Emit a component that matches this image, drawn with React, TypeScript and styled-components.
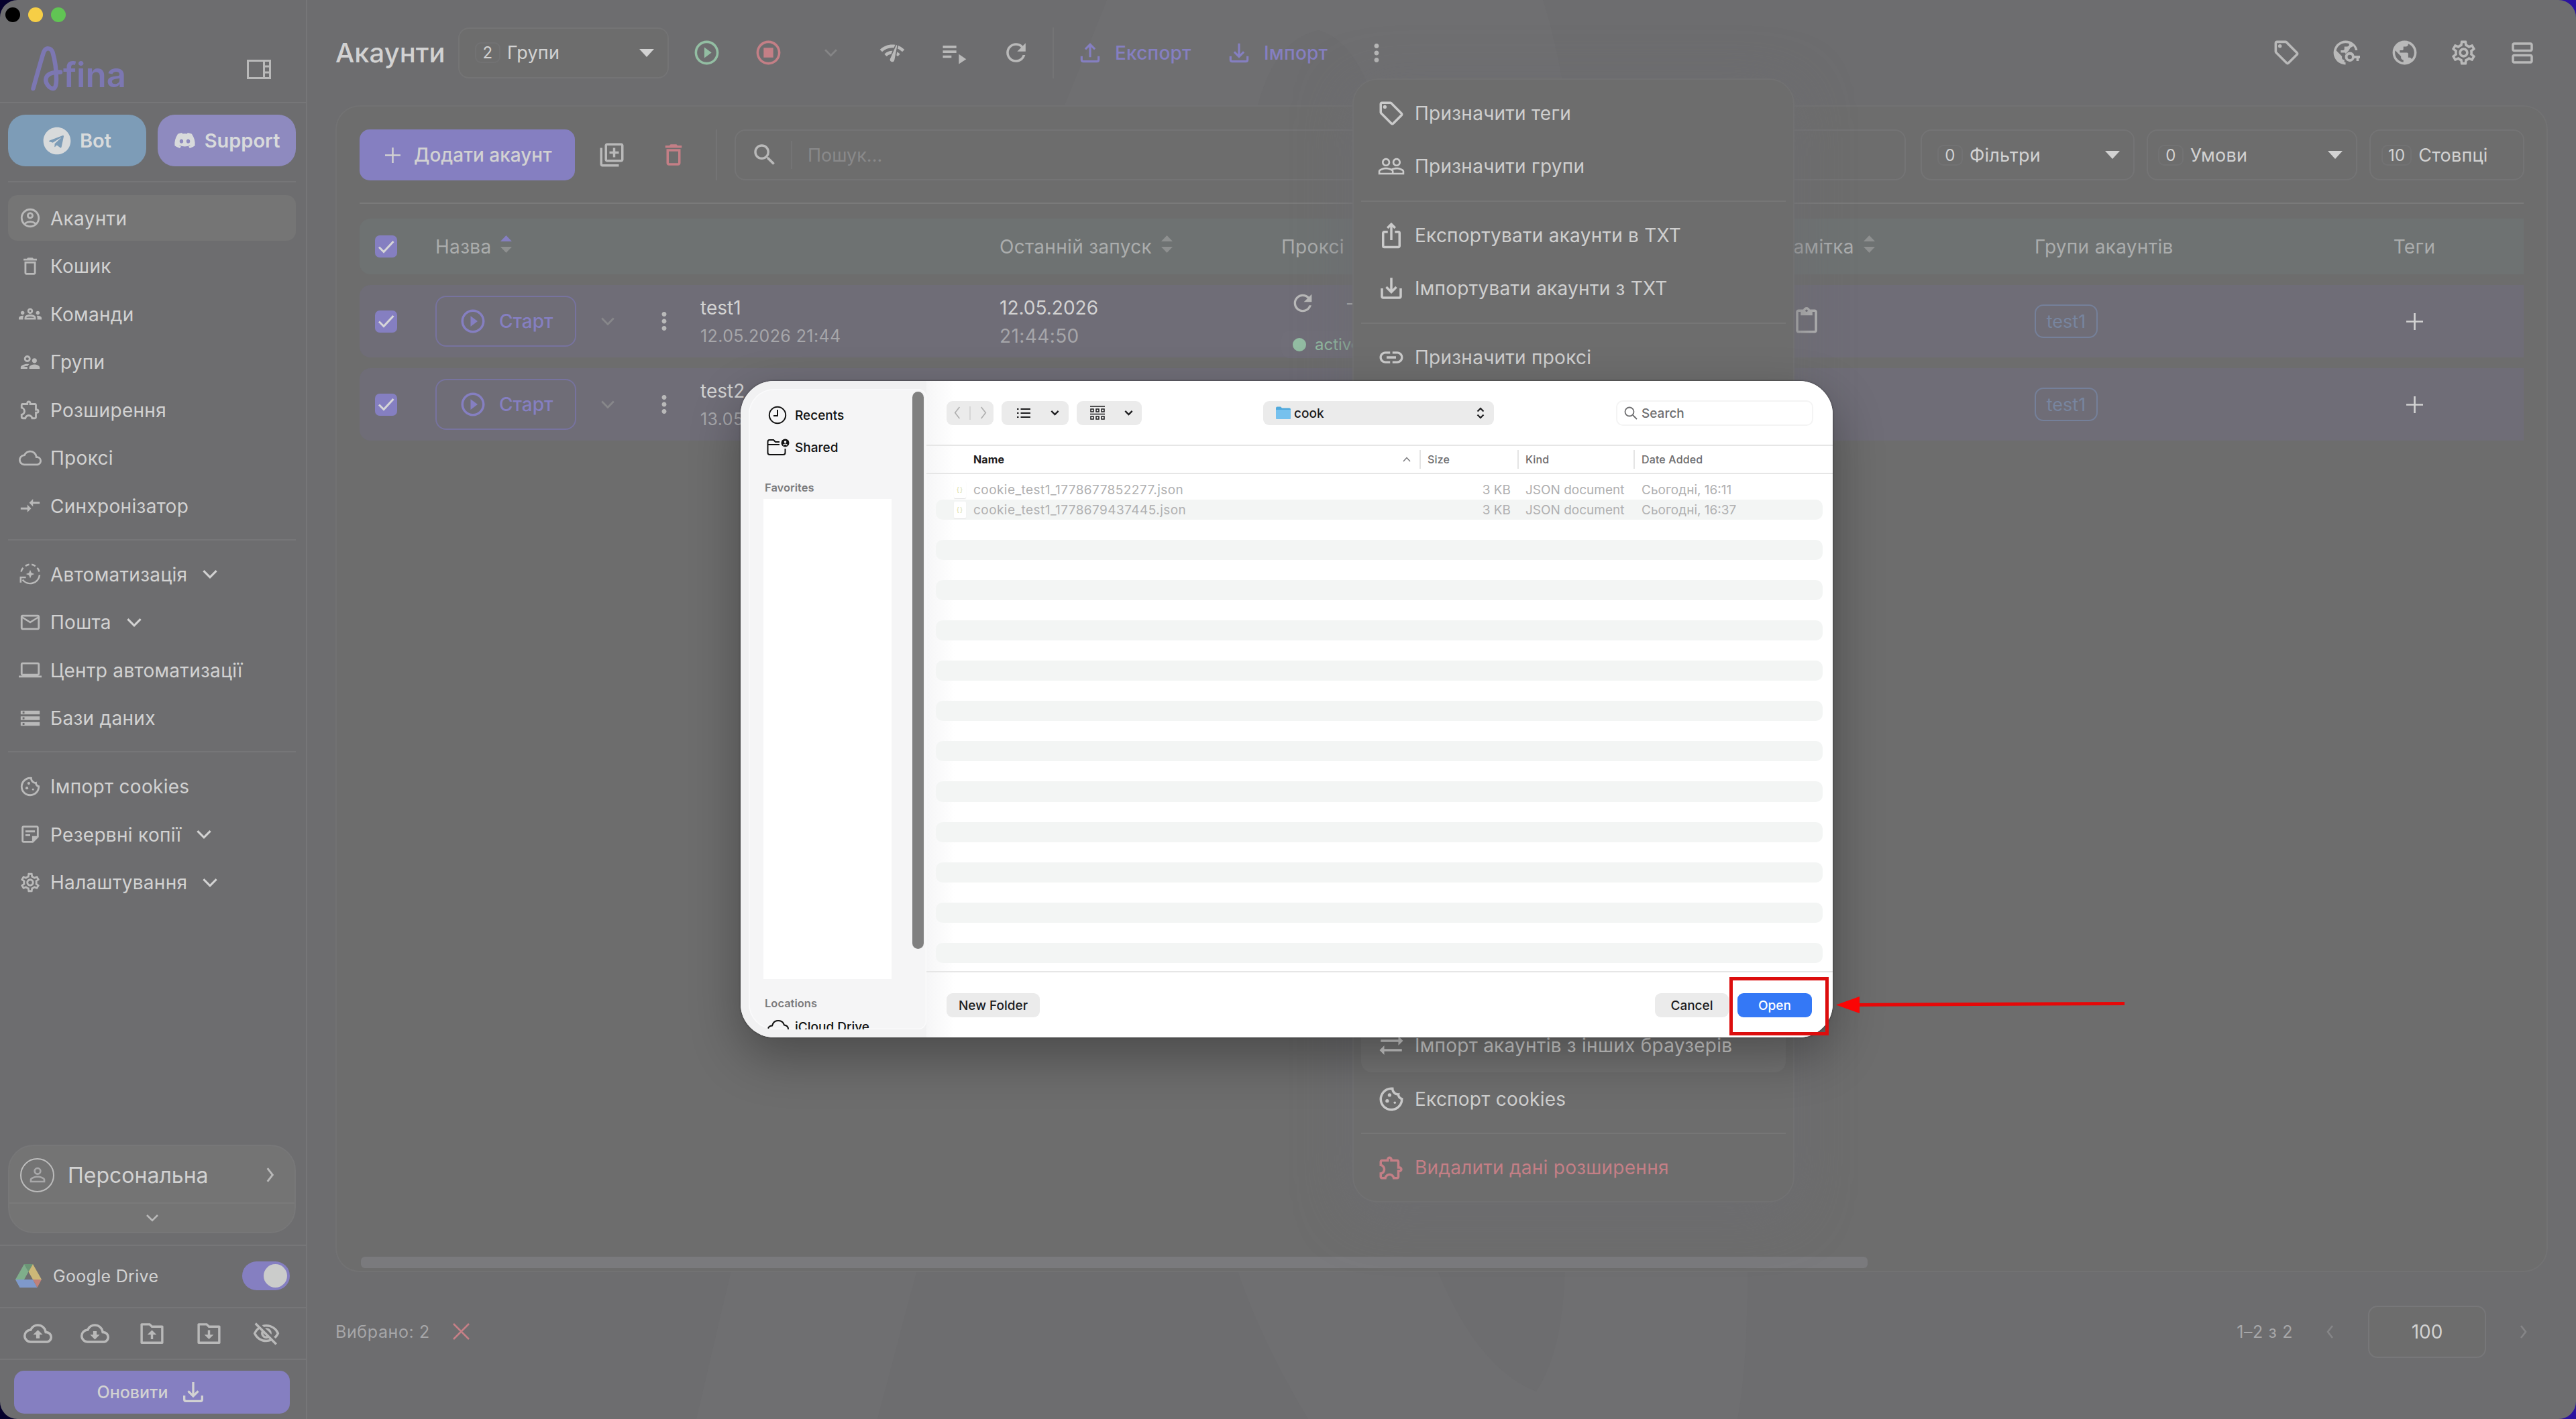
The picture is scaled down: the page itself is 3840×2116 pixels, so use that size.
import type { ReactNode } from "react";
import styled, { createGlobalStyle } from "styled-components";
import { FaDiscord, FaTelegram } from "react-icons/fa";
import { RiFolderDownloadLine, RiFolderUploadLine } from "react-icons/ri";
import {
  MdCompareArrows,
  MdContentPaste,
  MdDeleteOutline,
  MdIosShare,
  MdLink,
  MdMailOutline,
  MdMoreVert,
  MdNetworkCheck,
  MdOutlineAccountCircle,
  MdOutlineCloud,
  MdOutlineCloudDownload,
  MdOutlineCloudUpload,
  MdOutlineCookie,
  MdOutlineExtension,
  MdOutlineGroups,
  MdOutlineLaptop,
  MdOutlineLibraryAdd,
  MdOutlineSell,
  MdOutlineSettings,
  MdOutlineStickyNote2,
  MdOutlineStopCircle,
  MdOutlineSupervisorAccount,
  MdOutlineViewAgenda,
  MdOutlineVisibilityOff,
  MdPeopleOutline,
  MdPersonOutline,
  MdPlayCircleOutline,
  MdPlaylistPlay,
  MdPublic,
  MdRefresh,
  MdSaveAlt,
  MdSearch,
  MdStorage,
  MdSyncAlt,
} from "react-icons/md";

const colors = {
  base: "#6d6d6f",
  surface: "#6d6d6d",
  raised: "#757575",
  line: "#767678",
  border: "#747475",
  text: "#d2d2d2",
  icon: "#b9b9b9",
  muted: "#a8a8a9",
  faint: "#89898a",
  purple: "#857fc1",
  green: "#93bea3",
  red: "#c47f86",
};

const GlobalStyle = createGlobalStyle`
  * {
    box-sizing: border-box;
  }
  body {
    margin: 0;
    background: linear-gradient(90deg, #05002c 0%, #05002c 50%, #2a12a0 100%);
    font-family: Inter, "Noto Sans", sans-serif;
    color: ${colors.text};
  }
  svg {
    display: block;
    flex: none;
  }
`;

const Window = styled.div`
  position: relative;
  display: flex;
  width: 3840px;
  height: 2116px;
  overflow: hidden;
  border-radius: 26px;
  background: ${colors.base};
`;

/* ---------- small shared parts ---------- */

const IconSlot = styled.span<{ $w: number; $size: number; $color?: string }>`
  display: flex;
  flex: none;
  align-items: center;
  justify-content: center;
  width: ${(p) => p.$w}px;
  font-size: ${(p) => p.$size}px;
  color: ${(p) => p.$color ?? colors.icon};
`;

const Grow = styled.div`
  flex: 1;
`;

interface ChevronProps {
  dir?: "down" | "left" | "right";
  size?: number;
  weight?: number;
}

const chevronPaths = {
  down: "M2 6l8 8 8-8",
  left: "M13 1l-7 9 7 9",
  right: "M7 1l7 9-7 9",
};

const Chevron = ({ dir = "down", size = 24, weight = 2.6 }: ChevronProps) => (
  <svg width={size} height={size} viewBox="0 0 20 20" fill="none" stroke="currentColor" strokeWidth={weight}>
    <path d={chevronPaths[dir]} />
  </svg>
);

const TrayIcon = ({ up = false }: { up?: boolean }) => (
  <svg width="1em" height="1em" viewBox="0 0 24 24" fill="none" stroke="currentColor" strokeWidth="2">
    <path d="M4 15v3.5q0 1.5 1.500 1.500h13q1.500 0 1.500-1.500V15" />
    <path d={up ? "M12 16V4M7.500 8.500L12 4l4.500 4.500" : "M12 3v12M7.500 11l4.500 4.500L16.500 11"} />
  </svg>
);

const AutomationIcon = () => (
  <svg width="1em" height="1em" viewBox="0 0 24 24" fill="none" stroke="currentColor" strokeWidth="1.8">
    <path d="M2.500 9.500A10 10 0 0 1 4.500 5.500M7 3.500a10 10 0 0 1 4-1.500M13.500 2a10 10 0 0 1 4 1.700M19.500 5.500a10 10 0 0 1 2 4" />
    <path d="M21.900 13A10 10 0 0 1 4 18M2 21v-5.500h5.500" />
    <path d="M12 7.500l1.300 3.200 3.200 1.300-3.200 1.300L12 16.500l-1.300-3.200L7.500 12l3.200-1.300z" fill="currentColor" stroke="none" />
  </svg>
);

const GlobeKeyIcon = () => (
  <svg width="1em" height="1em" viewBox="0 0 24 24" fill="currentColor">
    <path d="M12 2a10 10 0 0 0 0 20v-2l-1-.1V18a2 2 0 0 1-2-2v-1l-4.800-4.800A8 8 0 0 1 15 4.600V5a2 2 0 0 1-2 2h-2v2a1 1 0 0 1-1 1H8v2h3.500l.5 1 2.500-2.500L16 8l2.500-1.400A8 8 0 0 1 20 10h2A10 10 0 0 0 12 2z" />
    <path d="M15.500 11.500a4 4 0 1 0 3.800 5.200H21V19h2v-2.300h1v-2.200h-4.700a4 4 0 0 0-3.800-3zm0 2.300a1.800 1.800 0 1 0 0 3.600 1.800 1.800 0 0 0 0-3.600z" fillRule="evenodd" />
  </svg>
);

const PanelIcon = () => (
  <svg width="36" height="29" viewBox="0 0 36 29" fill="none" stroke="currentColor" strokeWidth="3">
    <path d="M1.500 1.500h33v26h-33zM25.500 1.500v26M25.500 10h9M25.500 19h9" />
  </svg>
);

const DriveIcon = () => (
  <svg width="39" height="35" viewBox="0 0 39 35">
    <path d="M13 0h13l-6.500 11.500z" fill="#6b9676" />
    <path d="M13 0L0 23l6.500 11.500L19.500 11.500z" fill="#7fae8b" />
    <path d="M26 0l-6.500 11.500L26 23h13z" fill="#ccb878" />
    <path d="M13 23h13l6.500 12h-26L0 23z" fill="#7f99cb" />
    <path d="M26 23h13l-6.500 12z" fill="#c08179" />
  </svg>
);

/* ---------- sidebar ---------- */

const Sidebar = styled.aside`
  display: flex;
  flex: none;
  flex-direction: column;
  width: 458px;
  border-right: 2px solid ${colors.line};
`;

const TrafficLights = styled.div`
  display: flex;
  gap: 12px;
  height: 54px;
  padding: 11px 0 0 8px;
`;

const Light = styled.span<{ $color: string }>`
  width: 22px;
  height: 22px;
  border-radius: 50%;
  background: ${(p) => p.$color};
`;

const Brand = styled.div`
  display: flex;
  align-items: center;
  justify-content: space-between;
  height: 100px;
  padding: 0 52px 0 45px;
  border-bottom: 2px solid ${colors.line};
`;

const LogoText = styled.div`
  display: flex;
  align-items: flex-end;
  height: 70px;
  color: #7c77b2;
  font-size: 51px;
  font-weight: 600;
  line-height: 52px;
`;

const SocialRow = styled.div`
  display: flex;
  gap: 17px;
  margin: 0 15px 0 12px;
  padding: 17px 0 22px;
  border-bottom: 2px solid ${colors.line};
`;

const SocialButton = styled.button<{ $bg: string }>`
  display: flex;
  flex: 1;
  align-items: center;
  justify-content: center;
  gap: 13px;
  height: 77px;
  border: 0;
  border-radius: 26px;
  background: ${(p) => p.$bg};
  color: #d8dadb;
  font: 600 29px Inter, sans-serif;
`;

const Nav = styled.nav`
  display: flex;
  flex-direction: column;
  margin: 0 15px 0 12px;
  padding-top: 19px;
`;

const NavGroup = styled.div`
  display: flex;
  flex-direction: column;
  gap: 3.500px;
  padding-bottom: 15.500px;

  & + & {
    border-top: 2px solid ${colors.line};
    padding-top: 16.500px;
  }
`;

const NavItem = styled.a<{ $active?: boolean }>`
  display: flex;
  align-items: center;
  height: 68px;
  padding-left: 15px;
  border-radius: 14px;
  background: ${(p) => (p.$active ? colors.raised : "transparent")};
  font-size: 28px;
  letter-spacing: 0.3px;
`;

const NavLabel = styled.span`
  margin: 0 22px 0 12px;
  padding-top: 1px;
`;

const Profile = styled.div`
  margin: 0 15px 17px 12px;
  border: 2px solid #777778;
  border-radius: 38px;
  background: #747474;
`;

const ProfileMain = styled.div`
  display: flex;
  align-items: center;
  height: 86px;
  padding: 2px 25px 0 16px;
  border-bottom: 2px solid #7a7a7a;
  font-size: 32px;
`;

const Avatar = styled.span`
  display: flex;
  align-items: center;
  justify-content: center;
  width: 51px;
  height: 51px;
  margin-right: 20px;
  border: 2px solid #bcbcbc;
  border-radius: 50%;
  color: ${colors.muted};
  font-size: 34px;
`;

const ProfileMore = styled.div`
  display: flex;
  align-items: center;
  justify-content: center;
  height: 42px;
  color: ${colors.icon};
`;

const DriveRow = styled.div`
  display: flex;
  align-items: center;
  height: 93px;
  padding: 0 24px 2px 23px;
  border-top: 2px solid ${colors.line};
  font-size: 25px;
  letter-spacing: 0.3px;
`;

const DriveLabel = styled.span`
  flex: 1;
  padding-left: 17px;
`;

const Toggle = styled.span`
  display: flex;
  justify-content: flex-end;
  width: 71px;
  height: 43px;
  padding: 4px;
  border-radius: 22px;
  background: ${colors.purple};

  &::after {
    content: "";
    width: 35px;
    height: 35px;
    border-radius: 50%;
    background: #cbcccb;
  }
`;

const ToolRow = styled.div`
  display: flex;
  align-items: center;
  height: 77px;
  padding-left: 14px;
  border-top: 2px solid ${colors.line};
`;

const UpdateArea = styled.div`
  height: 90px;
  padding: 16px 25px 0 21px;
  border-top: 2px solid ${colors.line};
`;

const UpdateButton = styled.button`
  display: flex;
  align-items: center;
  justify-content: center;
  gap: 18px;
  width: 411px;
  height: 64px;
  border: 0;
  border-radius: 15px;
  background: ${colors.purple};
  color: ${colors.text};
  font: 500 25px Inter, sans-serif;
`;

interface NavEntry {
  icon: ReactNode;
  label: string;
  active?: boolean;
  expandable?: boolean;
}

const navGroups: NavEntry[][] = [
  [
    { icon: <MdOutlineAccountCircle />, label: "Акаунти", active: true },
    { icon: <MdDeleteOutline />, label: "Кошик" },
    { icon: <MdOutlineGroups />, label: "Команди" },
    { icon: <MdOutlineSupervisorAccount />, label: "Групи" },
    { icon: <MdOutlineExtension />, label: "Розширення" },
    { icon: <MdOutlineCloud />, label: "Проксі" },
    { icon: <MdCompareArrows />, label: "Синхронізатор" },
  ],
  [
    { icon: <AutomationIcon />, label: "Автоматизація", expandable: true },
    { icon: <MdMailOutline />, label: "Пошта", expandable: true },
    { icon: <MdOutlineLaptop />, label: "Центр автоматизації" },
    { icon: <MdStorage />, label: "Бази даних" },
  ],
  [
    { icon: <MdOutlineCookie />, label: "Імпорт cookies" },
    { icon: <MdOutlineStickyNote2 />, label: "Резервні копії", expandable: true },
    { icon: <MdOutlineSettings />, label: "Налаштування", expandable: true },
  ],
];

const SidebarPanel = () => (
  <Sidebar>
    <TrafficLights>
      <Light $color="#000" />
      <Light $color="#f6ce46" />
      <Light $color="#61c454" />
    </TrafficLights>
    <Brand>
      <LogoText>
        <svg width="49" height="70" viewBox="0 0 49 70" fill="none" stroke="currentColor" strokeWidth="6.500" strokeLinecap="round">
          <path d="M4.500 64C10 44 15 26 20 10c3-8 11-7 13.500 0C37 22 39 36 39 50c0 8-1 14-5 14-6 0-12-9-10.500-15C25 42 34 39.500 45 39.500" />
        </svg>
        fina
      </LogoText>
      <IconSlot $w={36} $size={36}>
        <PanelIcon />
      </IconSlot>
    </Brand>
    <SocialRow>
      <SocialButton $bg="#7d9cb7">
        <FaTelegram size={42} /> Bot
      </SocialButton>
      <SocialButton $bg="#8e8abf">
        <FaDiscord size={33} /> Support
      </SocialButton>
    </SocialRow>
    <Nav>
      {navGroups.map((group, i) => (
        <NavGroup key={i}>
          {group.map((item) => (
            <NavItem key={item.label} $active={item.active}>
              <IconSlot $w={36} $size={34}>
                {item.icon}
              </IconSlot>
              <NavLabel>{item.label}</NavLabel>
              {item.expandable && <Chevron />}
            </NavItem>
          ))}
        </NavGroup>
      ))}
    </Nav>
    <Grow />
    <Profile>
      <ProfileMain>
        <Avatar>
          <MdPersonOutline />
        </Avatar>
        Персональна
        <Grow />
        <IconSlot $w={24} $size={24}>
          <Chevron dir="right" size={22} />
        </IconSlot>
      </ProfileMain>
      <ProfileMore>
        <Chevron size={20} />
      </ProfileMore>
    </Profile>
    <DriveRow>
      <DriveIcon />
      <DriveLabel>Google Drive</DriveLabel>
      <Toggle />
    </DriveRow>
    <ToolRow>
      <IconSlot $w={85} $size={43}>
        <MdOutlineCloudUpload />
      </IconSlot>
      <IconSlot $w={85} $size={43}>
        <MdOutlineCloudDownload />
      </IconSlot>
      <IconSlot $w={85} $size={41}>
        <RiFolderUploadLine />
      </IconSlot>
      <IconSlot $w={85} $size={41}>
        <RiFolderDownloadLine />
      </IconSlot>
      <IconSlot $w={85} $size={42}>
        <MdOutlineVisibilityOff />
      </IconSlot>
    </ToolRow>
    <UpdateArea>
      <UpdateButton>
        Оновити
        <IconSlot $w={40} $size={40} $color={colors.text}>
          <TrayIcon />
        </IconSlot>
      </UpdateButton>
    </UpdateArea>
  </Sidebar>
);

/* ---------- main area ---------- */

const Backdrop = styled.svg`
  position: absolute;
  inset: 0;
`;

const Main = styled.main`
  position: relative;
  display: flex;
  flex: 1;
  flex-direction: column;
  min-width: 0;
  padding: 0 42px;
`;

const Header = styled.header`
  display: flex;
  align-items: center;
  height: 157px;
`;

const HeaderTools = styled.div`
  display: flex;
  gap: 44px;
  margin-left: auto;
  margin-right: 16px;
`;

const Title = styled.h1`
  flex: none;
  width: 183px;
  margin: 0;
  font-size: 40px;
  font-weight: 500;
`;

const Select = styled.div<{ $w: number; $pad?: number }>`
  display: flex;
  flex: none;
  align-items: center;
  width: ${(p) => p.$w}px;
  height: 76px;
  padding: 0 20px 0 ${(p) => p.$pad ?? 23}px;
  border: 2px solid ${colors.border};
  border-radius: 16px;
  background: ${colors.surface};
  font-size: 27px;
  letter-spacing: 0.2px;
`;

const Count = styled.span`
  display: flex;
  align-items: center;
  justify-content: center;
  min-width: 38px;
  height: 31px;
  margin-right: 10px;
  padding: 0 8px;
  border: 2px solid #727273;
  border-radius: 9px;
  font-size: 24px;
`;

const Caret = styled.span`
  margin-left: auto;
  border: 11px solid transparent;
  border-top: 12px solid ${colors.text};
  border-bottom: 0;
`;

const Separator = styled.span<{ $h: number; $color?: string }>`
  flex: none;
  width: 2px;
  height: ${(p) => p.$h}px;
  background: ${(p) => p.$color ?? colors.border};
`;

const HeaderLink = styled.button<{ $w: number }>`
  display: flex;
  align-items: center;
  gap: 17px;
  width: ${(p) => p.$w}px;
  padding: 0;
  border: 0;
  background: none;
  color: ${colors.purple};
  font: 500 28px Inter, sans-serif;
  letter-spacing: 0.2px;
`;

const Card = styled.section`
  display: flex;
  flex-direction: column;
  width: 3298px;
  height: 1740px;
  padding: 34px 34px 0;
  border: 2px solid #727273;
  border-radius: 36px;
  background: ${colors.surface};
`;

const Toolbar = styled.div`
  display: flex;
  align-items: center;
  height: 111px;
  padding-bottom: 33px;
  border-bottom: 2px solid #7a7a7a;
`;

const AddButton = styled.button`
  display: flex;
  flex: none;
  align-items: center;
  width: 321px;
  height: 76px;
  padding: 0 0 0 38px;
  border: 0;
  border-radius: 15px;
  background: ${colors.purple};
  color: ${colors.text};
  font: 500 28px Inter, sans-serif;
`;

const AddLabel = styled.span`
  padding-left: 20px;
`;

const PlusIcon = ({ size = 24 }: { size?: number }) => (
  <svg width={size} height={size} viewBox="0 0 24 24" stroke="currentColor" strokeWidth="2.600">
    <path d="M12 0v24M0 12h24" />
  </svg>
);

const SearchBox = styled.div`
  display: flex;
  flex: none;
  align-items: center;
  width: 1746px;
  height: 76px;
  margin-right: 22px;
  padding-left: 4px;
  border: 2px solid ${colors.border};
  border-radius: 16px;
  color: ${colors.faint};
  font-size: 27px;
`;

const Placeholder = styled.span`
  padding-left: 23px;
`;

const SelectGroup = styled.div`
  display: flex;
  gap: 18px;
`;

const TableRow = styled.div<{ $head?: boolean }>`
  display: grid;
  grid-template-columns: 113px 841px 420px 746px 377px 403px 326px;
  grid-template-rows: 100%;
  align-items: center;
  height: ${(p) => (p.$head ? 83 : 108)}px;
  margin-top: ${(p) => (p.$head ? 22 : 16)}px;
  border-radius: 16px 0 0 16px;
  background: ${(p) => (p.$head ? "#6e7272" : "#6f6d77")};
  color: ${(p) => (p.$head ? "#abadad" : colors.text)};
  font-size: 28px;
`;

const HeadCell = styled.div<{ $center?: boolean }>`
  display: flex;
  align-items: center;
  justify-content: ${(p) => (p.$center ? "center" : "flex-start")};
  gap: 14px;
  letter-spacing: 0.3px;

  svg {
    margin-bottom: 8px;
  }
`;

const Cell = styled.div<{ $pad?: number; $center?: boolean }>`
  display: flex;
  align-items: center;
  justify-content: ${(p) => (p.$center ? "center" : "flex-start")};
  padding-left: ${(p) => p.$pad ?? 0}px;
  color: inherit;
`;

const Stack = styled.div`
  display: flex;
  flex-direction: column;
  gap: 10px;
  padding-top: 1px;
  line-height: 32px;
`;

const SubText = styled.span<{ $size: number }>`
  color: #a6a6aa;
  font-size: ${(p) => p.$size}px;
  letter-spacing: 0.4px;
`;

const CheckBox = styled.span`
  display: flex;
  align-items: center;
  justify-content: center;
  width: 33px;
  height: 33px;
  border-radius: 7px;
  background: ${colors.purple};
`;

const StartButton = styled.button`
  display: flex;
  flex: none;
  align-items: center;
  width: 210px;
  height: 76px;
  padding: 0 0 0 33px;
  border: 2px solid #77739f;
  border-radius: 16px;
  background: none;
  color: ${colors.purple};
  font: 500 28px Inter, sans-serif;
`;

const StartLabel = styled.span`
  padding-left: 18px;
`;

const ProxyStack = styled.div`
  display: flex;
  flex-direction: column;
  gap: 21px;
  padding-top: 8px;
`;

const ProxyTop = styled.div`
  display: flex;
  align-items: center;
  gap: 44px;
  height: 40px;
  padding-left: 12px;
  color: ${colors.icon};
`;

const StatusChip = styled.span`
  display: flex;
  align-items: center;
  gap: 13px;
  width: 160px;
  height: 41px;
  padding-left: 17px;
  border-radius: 12px;
  background: #706e78;
  color: ${colors.green};
  font-size: 24px;

  &::before {
    content: "";
    width: 20px;
    height: 20px;
    border-radius: 50%;
    background: currentColor;
  }
`;

const GroupTag = styled.span`
  display: flex;
  align-items: center;
  justify-content: center;
  width: 94px;
  height: 50px;
  border: 2px solid #75809a;
  border-radius: 13px;
  color: #78859f;
  font-size: 27px;
`;

const ScrollTrack = styled.div`
  width: 2246px;
  height: 17px;
  margin: auto 0 4px 2px;
  border-radius: 6px;
  background: #7a7a7d;
`;

const Footer = styled.footer`
  display: flex;
  flex: 1;
  align-items: center;
  width: 3316px;
  padding-bottom: 42px;
  color: #a6a6a8;
  font-size: 25px;
  letter-spacing: 0.6px;
`;

const PageSize = styled.span`
  display: flex;
  align-items: center;
  justify-content: center;
  width: 176px;
  height: 78px;
  border: 2px solid #777779;
  border-radius: 14px;
  background: ${colors.surface};
  color: ${colors.text};
  font-size: 28px;
  letter-spacing: 0;
`;

const SortIcon = ({ asc = false }: { asc?: boolean }) => (
  <svg width="17" height="26" viewBox="0 0 17 26" fill="#8e9090">
    <path d="M8.500 0L17 9H0z" fill={asc ? colors.purple : undefined} />
    <path d="M8.500 26L17 17H0z" />
  </svg>
);

const Check = () => (
  <CheckBox>
    <svg width="25" height="22" viewBox="0 0 25 22" fill="none" stroke="#d6d6d8" strokeWidth="3">
      <path d="M2 11.500l7 7L23.500 3" />
    </svg>
  </CheckBox>
);

const accounts = [
  { name: "test1", created: "12.05.2026 21:44", runDate: "12.05.2026", runTime: "21:44:50", proxy: "active", group: "test1" },
  { name: "test2", created: "13.05.2026 16:10", runDate: "", runTime: "", proxy: "", group: "test1" },
];

const AccountsTable = () => (
  <>
    <TableRow $head>
      <Cell $pad={23}>
        <Check />
      </Cell>
      <HeadCell>
        Назва <SortIcon asc />
      </HeadCell>
      <HeadCell>
        Останній запуск <SortIcon />
      </HeadCell>
      <HeadCell>Проксі</HeadCell>
      <HeadCell>
        Замітка <SortIcon />
      </HeadCell>
      <HeadCell>Групи акаунтів</HeadCell>
      <HeadCell $center>Теги</HeadCell>
    </TableRow>
    {accounts.map((account) => (
      <TableRow key={account.name}>
        <Cell $pad={23}>
          <Check />
        </Cell>
        <Cell>
          <StartButton>
            <IconSlot $w={42} $size={42} $color={colors.purple}>
              <MdPlayCircleOutline />
            </IconSlot>
            <StartLabel>Старт</StartLabel>
          </StartButton>
          <IconSlot $w={94} $size={24} $color="#87878a">
            <Chevron size={22} />
          </IconSlot>
          <IconSlot $w={74} $size={42}>
            <MdMoreVert />
          </IconSlot>
          <Cell $pad={17}>
            <Stack>
              {account.name}
              <SubText $size={25}>{account.created}</SubText>
            </Stack>
          </Cell>
        </Cell>
        <Stack>
          {account.runDate}
          <SubText $size={28}>{account.runTime}</SubText>
        </Stack>
        <ProxyStack>
          {account.proxy && (
            <>
              <ProxyTop>
                <MdRefresh size={40} />-
              </ProxyTop>
              <StatusChip>{account.proxy}</StatusChip>
            </>
          )}
        </ProxyStack>
        <Cell $pad={18}>
          <IconSlot $w={38} $size={42}>
            <MdContentPaste />
          </IconSlot>
        </Cell>
        <Cell>
          <GroupTag>{account.group}</GroupTag>
        </Cell>
        <Cell $center>
          <PlusIcon size={25} />
        </Cell>
      </TableRow>
    ))}
  </>
);

const MainPanel = () => (
  <Main>
    <Header>
      <Title>Акаунти</Title>
      <Select $w={314}>
        <Count>2</Count>
        Групи
        <Caret />
      </Select>
      <IconSlot $w={112} $size={43} $color={colors.green}>
        <MdPlayCircleOutline />
      </IconSlot>
      <IconSlot $w={72} $size={43} $color={colors.red}>
        <MdOutlineStopCircle />
      </IconSlot>
      <IconSlot $w={114} $size={24} $color="#858586">
        <Chevron size={21} />
      </IconSlot>
      <IconSlot $w={70} $size={40}>
        <MdNetworkCheck />
      </IconSlot>
      <IconSlot $w={114} $size={44}>
        <MdPlaylistPlay />
      </IconSlot>
      <IconSlot $w={70} $size={43}>
        <MdRefresh />
      </IconSlot>
      <IconSlot $w={42} $size={20}>
        <Separator $h={76} />
      </IconSlot>
      <IconSlot $w={14} $size={0} />
      <HeaderLink $w={222}>
        <IconSlot $w={40} $size={38} $color={colors.purple}>
          <TrayIcon up />
        </IconSlot>
        Експорт
      </HeaderLink>
      <HeaderLink $w={198}>
        <IconSlot $w={40} $size={38} $color={colors.purple}>
          <TrayIcon />
        </IconSlot>
        Імпорт
      </HeaderLink>
      <IconSlot $w={54} $size={42}>
        <MdMoreVert />
      </IconSlot>
      <HeaderTools>
        <IconSlot $w={44} $size={43}>
          <MdOutlineSell />
        </IconSlot>
        <IconSlot $w={44} $size={43}>
          <GlobeKeyIcon />
        </IconSlot>
        <IconSlot $w={44} $size={43}>
          <MdPublic />
        </IconSlot>
        <IconSlot $w={44} $size={43}>
          <MdOutlineSettings />
        </IconSlot>
        <IconSlot $w={44} $size={42}>
          <MdOutlineViewAgenda />
        </IconSlot>
      </HeaderTools>
    </Header>
    <Card>
      <Toolbar>
        <AddButton>
          <PlusIcon size={23} />
          <AddLabel>Додати акаунт</AddLabel>
        </AddButton>
        <IconSlot $w={110} $size={42}>
          <MdOutlineLibraryAdd />
        </IconSlot>
        <IconSlot $w={74} $size={42} $color={colors.red}>
          <MdDeleteOutline />
        </IconSlot>
        <IconSlot $w={54} $size={20}>
          <Separator $h={76} />
        </IconSlot>
        <SearchBox>
          <IconSlot $w={78} $size={42}>
            <MdSearch />
          </IconSlot>
          <Separator $h={42} />
          <Placeholder>Пошук...</Placeholder>
        </SearchBox>
        <SelectGroup>
          <Select $w={319}>
            <Count>0</Count>
            Фільтри
            <Caret />
          </Select>
          <Select $w={314} $pad={15}>
            <Count>0</Count>
            Умови
            <Caret />
          </Select>
          <Select $w={231} $pad={16}>
            <Count>10</Count>
            Стовпці
          </Select>
        </SelectGroup>
      </Toolbar>
      <AccountsTable />
      <ScrollTrack />
    </Card>
    <Footer>
      Вибрано: 2
      <IconSlot $w={94} $size={24} $color={colors.red}>
        <svg width="25" height="25" viewBox="0 0 25 25" stroke="currentColor" strokeWidth="2.600">
          <path d="M1 1l23 23M24 1L1 24" />
        </svg>
      </IconSlot>
      <Grow />
      1–2 з 2
      <IconSlot $w={112} $size={20} $color="#858587">
        <Chevron dir="left" size={20} />
      </IconSlot>
      <PageSize>100</PageSize>
      <IconSlot $w={110} $size={20} $color="#858587">
        <Chevron dir="right" size={20} />
      </IconSlot>
    </Footer>
  </Main>
);

/* ---------- context menu ---------- */

const Menu = styled.div`
  position: absolute;
  top: 117px;
  left: 2016px;
  display: flex;
  flex-direction: column;
  justify-content: space-between;
  width: 659px;
  height: 1676px;
  padding: 10px 11px;
  border: 2px solid #717172;
  border-radius: 38px;
  background: ${colors.surface};
  box-shadow: 0 16px 80px rgba(109, 109, 113, 0.9);
`;

const MenuBlock = styled.div``;

const MenuItem = styled.div<{ $active?: boolean; $danger?: boolean }>`
  display: flex;
  align-items: center;
  gap: 14px;
  height: 79.500px;
  padding-left: 24px;
  border-radius: 16px;
  background: ${(p) => (p.$active ? "#737373" : "transparent")};
  color: ${(p) => (p.$danger ? colors.red : "#cfcfcf")};
  font-size: 28px;
  letter-spacing: 0.25px;
`;

const MenuLine = styled.div`
  height: 2px;
  margin: 10.500px 0;
  background: #767676;
`;

interface MenuEntryProps {
  icon: ReactNode;
  label: string;
  active?: boolean;
  danger?: boolean;
}

const MenuEntry = ({ icon, label, active, danger }: MenuEntryProps) => (
  <MenuItem $active={active} $danger={danger}>
    <IconSlot $w={42} $size={42} $color={danger ? colors.red : "#cacaca"}>
      {icon}
    </IconSlot>
    {label}
  </MenuItem>
);

const ActionsMenu = () => (
  <Menu>
    <MenuBlock>
      <MenuEntry icon={<MdOutlineSell />} label="Призначити теги" />
      <MenuEntry icon={<MdPeopleOutline />} label="Призначити групи" />
      <MenuLine />
      <MenuEntry icon={<MdIosShare />} label="Експортувати акаунти в TXT" />
      <MenuEntry icon={<MdSaveAlt />} label="Імпортувати акаунти з TXT" />
      <MenuLine />
      <MenuEntry icon={<MdLink />} label="Призначити проксі" />
    </MenuBlock>
    <MenuBlock>
      <MenuEntry icon={<MdSyncAlt />} label="Імпорт акаунтів з інших браузерів" active />
      <MenuEntry icon={<MdOutlineCookie />} label="Експорт cookies" />
      <MenuLine />
      <MenuEntry icon={<MdOutlineExtension />} label="Видалити дані розширення" danger />
    </MenuBlock>
  </Menu>
);

/* ---------- file dialog ---------- */

const Dialog = styled.div`
  position: absolute;
  top: 568px;
  left: 1104px;
  display: flex;
  width: 1628px;
  height: 979px;
  overflow: hidden;
  border-radius: 50px;
  background: #fff;
  color: #1c1c1e;
  font-size: 19px;
  font-weight: 500;
`;

const DialogShadow = styled.div`
  position: absolute;
  top: 568px;
  left: 1104px;
  width: 1628px;
  height: 979px;
  border-radius: 50px;
  box-shadow: 0 0 3px rgba(0, 0, 0, 0.5), 0 28px 76px rgba(0, 0, 0, 0.32);
`;

const PlacesArea = styled.div`
  flex: none;
  width: 277px;
  padding: 12px 0 12px 12px;
  background: #f1f1f2;
`;

const Places = styled.div`
  display: flex;
  justify-content: space-between;
  height: 955px;
  overflow: hidden;
  border-radius: 38px 12px 12px 38px;
  background: #f5f5f6;
  box-shadow: inset 0 0 0 1.500px #fafafb;
`;

const PlacesList = styled.div`
  padding: 15px 0 0 22px;
`;

const Place = styled.div`
  display: flex;
  align-items: center;
  gap: 8px;
  height: 48px;
  padding-left: 5px;
  color: #111;
`;

const PlacesTitle = styled.div`
  padding: 25px 0 0 2px;
  color: #7b7b7d;
  font-size: 16.500px;
  font-weight: 600;
  line-height: 22px;
`;

const HiddenPlaces = styled.div`
  width: 191px;
  height: 716px;
  margin-top: 6px;
  background: #fff;
`;

const PlacesThumb = styled.div`
  width: 17px;
  height: 831px;
  margin: 4px 4px 0 0;
  border-radius: 9px;
  background: #808080;
`;

const Browser = styled.div`
  display: flex;
  flex: 1;
  flex-direction: column;
  background: linear-gradient(90deg, #f6f6f7 0, #fff 42px);
`;

const BrowserBar = styled.div`
  display: flex;
  align-items: center;
  height: 97px;
  padding: 0 29px 0 30px;
  border-bottom: 2px solid #e6e6e6;
`;

const BarButton = styled.div<{ $w: number; $gap?: number; $pad?: string }>`
  display: flex;
  align-items: center;
  justify-content: space-between;
  width: ${(p) => p.$w}px;
  height: 36px;
  margin-right: ${(p) => p.$gap ?? 0}px;
  padding: ${(p) => p.$pad ?? "0"};
  border-radius: 9px;
  background: #ebebeb;
`;

const PathName = styled.span`
  flex: 1;
  padding: 1px 0 0 5px;
`;

const FinderSearch = styled.div`
  display: flex;
  align-items: center;
  gap: 6px;
  width: 294px;
  height: 38px;
  margin-left: auto;
  padding: 1px 0 0 10px;
  border: 2px solid #f4f4f4;
  border-radius: 10px;
  color: #6e6e70;
`;

const ColumnHead = styled.div`
  display: grid;
  grid-template-columns: 70px 665px 146px 173px 1fr;
  align-items: center;
  height: 42px;
  border-bottom: 2px solid #e6e6e6;
  color: #6c6c6e;
  font-size: 16px;
`;

const ColumnTitle = styled.span<{ $main?: boolean }>`
  display: flex;
  align-items: center;
  justify-content: space-between;
  height: 28px;
  padding: ${(p) => (p.$main ? "0 13px 0 0" : "0 0 0 10px")};
  border-left: ${(p) => (p.$main ? "0" : "2px solid #e4e4e4")};
  color: ${(p) => (p.$main ? "#1c1c1e" : "inherit")};
  font-weight: ${(p) => (p.$main ? 700 : 500)};
  letter-spacing: 0.15px;
`;

const FileList = styled.div`
  flex: 1;
  padding: 8px 15px 0 14px;
`;

const FileRow = styled.div<{ $striped: boolean }>`
  display: grid;
  grid-template-columns: 56px 665px 146px 173px 1fr;
  align-items: center;
  height: 30.040px;
  border-radius: 10px;
  background: ${(p) => (p.$striped ? "#f3f5f4" : "transparent")};
  color: #b0b0b1;
  font-weight: 400;
`;

const FileIcon = styled.span`
  display: flex;
  align-items: center;
  justify-content: center;
  width: 18px;
  height: 25px;
  margin-left: 27px;
  border-radius: 2px;
  background: #fff;
  box-shadow: 0 1px 1px #e3e3e3;
  color: #d9dca8;
  font-size: 10px;
  letter-spacing: 1px;
`;

const FileName = styled.span`
  letter-spacing: 0.45px;
`;

const FileCell = styled.span<{ $right?: boolean }>`
  padding: ${(p) => (p.$right ? "0 10px 0 0" : "0 0 0 12px")};
  text-align: ${(p) => (p.$right ? "right" : "left")};
`;

const DialogFooter = styled.div`
  display: flex;
  align-items: center;
  gap: 13px;
  height: 99px;
  padding: 0 31px 0 30px;
  border-top: 2px solid #e6e6e6;
`;

const DialogButton = styled.button<{ $w: number; $primary?: boolean }>`
  width: ${(p) => p.$w}px;
  height: 36px;
  padding: 1px 0 0;
  border: 0;
  border-radius: 9px;
  background: ${(p) => (p.$primary ? "#3478f6" : "#ebebeb")};
  color: ${(p) => (p.$primary ? "#fff" : "#1c1c1e")};
  font: 500 19px Inter, sans-serif;
`;

const ClockIcon = () => (
  <svg width="34" height="28" viewBox="0 0 34 28" fill="none" stroke="#111" strokeWidth="2">
    <circle cx="16" cy="14" r="12.200" />
    <path d="M16 6v9h-6" />
  </svg>
);

const SharedIcon = () => (
  <svg width="34" height="26" viewBox="0 0 34 26" fill="none" stroke="#111" strokeWidth="2">
    <path d="M19 5h-6l-3-3H4Q1.500 2 1.500 5v16q0 3 3 3h20q3 0 3-3v-6M2 9h17" />
    <circle cx="27.500" cy="6.500" r="6" fill="#111" stroke="none" />
    <circle cx="27.500" cy="5" r="1.800" fill="#fff" stroke="none" />
    <path d="M24.500 10q3-3.500 6 0" stroke="#fff" strokeWidth="1.500" />
  </svg>
);

const CloudIcon = () => (
  <svg width="34" height="24" viewBox="0 0 34 24" fill="none" stroke="#111" strokeWidth="2">
    <path d="M8 21Q2 21 2 16t6-5.500Q10 3 17 3t9 6.500q6 1 6 6T26 21z" />
  </svg>
);

const ListViewIcon = () => (
  <svg width="20" height="16" viewBox="0 0 20 16" stroke="#1c1c1e" strokeWidth="1.800">
    <path d="M0 2h2.500M5.500 2H20M0 8h2.500M5.500 8H20M0 14h2.500M5.500 14H20" />
  </svg>
);

const GroupViewIcon = () => (
  <svg width="22" height="22" viewBox="0 0 22 22" fill="none" stroke="#1c1c1e" strokeWidth="1.500">
    <path d="M0 1h22M0 12.500h22" />
    <path d="M1 5h4v4H1zM9 5h4v4H9zM17 5h4v4h-4zM1 16h4v4H1zM9 16h4v4H9zM17 16h4v4h-4z" />
  </svg>
);

const FolderIcon = () => (
  <svg width="22" height="20" viewBox="0 0 22 20">
    <path d="M0 2.500Q0 0.500 2 0.500h5l2 2h11q2 0 2 2V17q0 2-2 2H2q-2 0-2-2z" fill="#4fa9dc" />
    <path d="M0 5h22v12q0 2-2 2H2q-2 0-2-2z" fill="#76c1ee" />
  </svg>
);

const UpDownIcon = () => (
  <svg width="12" height="18" viewBox="0 0 12 18" fill="none" stroke="#1c1c1e" strokeWidth="2.200">
    <path d="M1.500 6.500L6 2l4.500 4.500M1.500 11.500L6 16l4.500-4.500" />
  </svg>
);

const LensIcon = () => (
  <svg width="20" height="20" viewBox="0 0 20 20" fill="none" stroke="currentColor" strokeWidth="1.800">
    <circle cx="8" cy="8" r="6.500" />
    <path d="M13 13l6 6" />
  </svg>
);

const files = [
  { name: "cookie_test1_1778677852277.json", size: "3 KB", kind: "JSON document", added: "Сьогодні, 16:11" },
  { name: "cookie_test1_1778679437445.json", size: "3 KB", kind: "JSON document", added: "Сьогодні, 16:37" },
];

const rows = Array.from({ length: 24 }, (_, i) => files[i]);

const FileDialog = () => (
  <Dialog>
    <PlacesArea>
      <Places>
        <PlacesList>
          <Place>
            <ClockIcon /> Recents
          </Place>
          <Place>
            <SharedIcon /> Shared
          </Place>
          <PlacesTitle>Favorites</PlacesTitle>
          <HiddenPlaces />
          <PlacesTitle>Locations</PlacesTitle>
          <Place>
            <CloudIcon /> iCloud Drive
          </Place>
        </PlacesList>
        <PlacesThumb />
      </Places>
    </PlacesArea>
    <Browser>
      <BrowserBar>
        <BarButton $w={70} $gap={12}>
          <IconSlot $w={32} $size={18} $color="#b0b0b0">
            <Chevron dir="left" size={19} weight={1.8} />
          </IconSlot>
          <Separator $h={20} $color="#d6d6d6" />
          <IconSlot $w={32} $size={18} $color="#b0b0b0">
            <Chevron dir="right" size={19} weight={1.8} />
          </IconSlot>
        </BarButton>
        <BarButton $w={100} $gap={12} $pad="0 14px 0 23px">
          <ListViewIcon />
          <Chevron size={13} weight={3.6} />
        </BarButton>
        <BarButton $w={97} $gap={181} $pad="0 13px 0 20px">
          <GroupViewIcon />
          <Chevron size={13} weight={3.6} />
        </BarButton>
        <BarButton $w={344} $pad="0 14px 0 19px">
          <FolderIcon />
          <PathName>cook</PathName>
          <UpDownIcon />
        </BarButton>
        <FinderSearch>
          <LensIcon /> Search
        </FinderSearch>
      </BrowserBar>
      <ColumnHead>
        <span />
        <ColumnTitle $main>
          Name
          <svg width="12" height="8" viewBox="0 0 12 8" fill="none" stroke="#77777a" strokeWidth="1.500">
            <path d="M1 7l5-5.500L11 7" />
          </svg>
        </ColumnTitle>
        <ColumnTitle>Size</ColumnTitle>
        <ColumnTitle>Kind</ColumnTitle>
        <ColumnTitle>Date Added</ColumnTitle>
      </ColumnHead>
      <FileList>
        {rows.map((file, i) => (
          <FileRow key={i} $striped={i % 2 === 1}>
            {file && (
              <>
                <FileIcon>{"{}"}</FileIcon>
                <FileName>{file.name}</FileName>
                <FileCell $right>{file.size}</FileCell>
                <FileCell>{file.kind}</FileCell>
                <FileCell>{file.added}</FileCell>
              </>
            )}
          </FileRow>
        ))}
      </FileList>
      <DialogFooter>
        <DialogButton $w={139}>New Folder</DialogButton>
        <Grow />
        <DialogButton $w={110}>Cancel</DialogButton>
        <DialogButton $w={111} $primary>
          Open
        </DialogButton>
      </DialogFooter>
    </Browser>
  </Dialog>
);

/* ---------- callout over the Open button ---------- */

const Highlight = styled.div`
  position: absolute;
  top: 1457px;
  left: 2578px;
  width: 148px;
  height: 87px;
  border: 5px solid #dc0d0d;
`;

const Arrow = styled.svg`
  position: absolute;
  top: 1482px;
  left: 2736px;
`;

const App = () => {
  return (
    <>
      <GlobalStyle />
      <Window>
        <Backdrop width="3840" height="2116" viewBox="0 0 3840 2116" fill="#6f6f71">
          <path d="M1650 0H2300Q2320 60 2335 157H2050Q2020 60 1965 45 1900 60 1875 157H1587z" />
          <path d="M1091 1890h277l-60 226h-270z" />
          <path d="M1843 1890h298q60 150 149 185 40-60 43-185h272q0 150-15 226H1950Q1880 2000 1843 1890z" />
        </Backdrop>
        <SidebarPanel />
        <MainPanel />
        <ActionsMenu />
        <DialogShadow />
        <FileDialog />
        <Highlight />
        <Arrow width="432" height="32" viewBox="0 0 432 32">
          <path d="M30 16.500L431 14.500" stroke="#e60808" strokeWidth="5" />
          <path d="M1 16.500L36 4v25z" fill="#fb0505" />
        </Arrow>
      </Window>
    </>
  );
};

export default App;
